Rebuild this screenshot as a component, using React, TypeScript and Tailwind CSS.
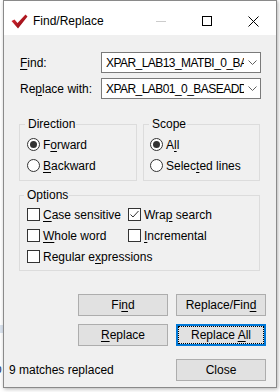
import { FC, ReactNode } from "react";

// mnemonic underline
const U: FC<{ children: ReactNode }> = ({ children }) => (
  <span className="underline decoration-1 underline-offset-[2px]">{children}</span>
);

const Radio: FC<{ checked?: boolean; children: ReactNode }> = ({ checked, children }) => (
  <div className="flex h-[21px] items-center gap-[3px]">
    <span className="flex h-[13px] w-[13px] items-center justify-center rounded-full border border-[#333333] bg-white">
      {checked && <span className="h-[7px] w-[7px] rounded-full bg-[#333333]" />}
    </span>
    <span className="whitespace-nowrap">{children}</span>
  </div>
);

const Check: FC<{ checked?: boolean; children: ReactNode }> = ({ checked, children }) => (
  <div className="flex h-[21px] items-center gap-[3px]">
    <span className="flex h-[13px] w-[13px] items-center justify-center border border-[#333333] bg-white">
      {checked && (
        <svg width="11" height="11" viewBox="0 0 11 11">
          <path d="M1.5 5.5 L4 8 L9.5 2" fill="none" stroke="#333333" strokeWidth="1" />
        </svg>
      )}
    </span>
    <span className="whitespace-nowrap">{children}</span>
  </div>
);

const Combo: FC<{ value: string }> = ({ value }) => (
  <div className="flex h-[21px] w-[160px] items-center border border-[#7a7a7a] bg-white">
    <div className="flex-1 overflow-hidden whitespace-nowrap pl-[4px] tracking-[-0.55px]">{value}</div>
    <div className="flex w-[16px] items-center justify-center">
      <svg width="9" height="5" viewBox="0 0 9 5">
        <path d="M0.5 0.5 L4.5 4.5 L8.5 0.5" fill="none" stroke="#606060" strokeWidth="1" />
      </svg>
    </div>
  </div>
);

const Btn: FC<{ children: ReactNode; primary?: boolean }> = ({ children, primary }) => (
  <div
    className={
      primary
        ? "flex h-[22px] w-[90px] items-center justify-center border-2 border-[#0078d7] bg-[#e1e1e1] outline-1 outline-dotted outline-black outline-offset-[-3px]"
        : "flex h-[22px] w-[90px] items-center justify-center border border-[#adadad] bg-[#e1e1e1]"
    }
  >
    <span className="whitespace-nowrap">{children}</span>
  </div>
);

export default function App() {
  return (
    <div className="relative h-[392px] w-[280px] overflow-hidden bg-white font-['Liberation_Sans',Arial,sans-serif] text-[12px] leading-[14px] text-black">
      {/* bits of the window behind */}
      <div className="absolute left-0 top-[325px] h-[8px] w-[4px] bg-[#dbe4ef]" />
      <div className="absolute left-[-5px] top-[362px] text-[12px] text-[#1f3a6b]">p</div>

      <div className="relative ml-[3px] flex h-[388px] w-[274px] flex-col border border-[#8a8a8a] shadow-[1px_1px_4px_rgba(0,0,0,0.3)]">
        {/* Title bar */}
        <div className="flex h-[34px] items-center bg-white pt-[6px]">
          <svg className="ml-[7px]" width="17" height="15" viewBox="0 0 17 15">
            <defs>
              <linearGradient id="chk" x1="0" y1="0" x2="1" y2="1">
                <stop offset="0" stopColor="#e8323c" />
                <stop offset="1" stopColor="#7a0008" />
              </linearGradient>
            </defs>
            <path d="M0.5 7 L3.5 5.5 L6.5 9 L14.5 0.5 L16.5 2.5 L7 14.5 Z" fill="url(#chk)" />
          </svg>
          <span className="ml-[5px]">Find/Replace</span>
          <div className="ml-auto flex h-full items-center">
            <div className="flex h-full w-[46px] items-center justify-center">
              <span className="h-px w-[10px] bg-[#cccccc]" />
            </div>
            <div className="flex h-full w-[46px] items-center justify-center">
              <span className="h-[10px] w-[10px] border border-black" />
            </div>
            <div className="flex h-full w-[46px] items-center justify-center">
              <svg width="11" height="11" viewBox="0 0 11 11">
                <path d="M0.5 0.5 L10.5 10.5 M10.5 0.5 L0.5 10.5" stroke="#000" strokeWidth="1" />
              </svg>
            </div>
          </div>
        </div>

        {/* Body */}
        <div className="flex flex-1 flex-col bg-[#f0f0f0] pt-[17px]">
          <div className="flex items-center">
            <span className="w-[97px] pl-[16px]">
              <U>F</U>ind:
            </span>
            <Combo value="XPAR_LAB13_MATBI_0_BASEADDR" />
          </div>
          <div className="mt-[5px] flex items-center">
            <span className="w-[97px] pl-[16px]">
              Re<U>p</U>lace with:
            </span>
            <Combo value="XPAR_LAB01_0_BASEADDR" />
          </div>

          <div className="mt-[18px] flex gap-[6px] pl-[15px]">
            <fieldset className="w-[118px] border border-[#dcdcdc] pb-[4px] pl-[7px]">
              <legend className="ml-[-2px] pl-[3px] pr-[1px]">Direction</legend>
              <div className="pt-[3px]">
                <Radio checked>
                  F<U>o</U>rward
                </Radio>
                <Radio>
                  <U>B</U>ackward
                </Radio>
              </div>
            </fieldset>
            <fieldset className="w-[117px] border border-[#dcdcdc] pb-[4px] pl-[6px]">
              <legend className="ml-[-1px] pl-[3px] pr-[1px]">Scope</legend>
              <div className="pt-[3px]">
                <Radio checked>
                  A<U>l</U>l
                </Radio>
                <Radio>
                  Selec<U>t</U>ed lines
                </Radio>
              </div>
            </fieldset>
          </div>

          <div className="pl-[15px]">
            <fieldset className="mt-[7px] w-[241px] border border-[#dcdcdc] pb-[3px] pl-[7px]">
              <legend className="ml-[-3px] pl-[3px] pr-[1px]">Options</legend>
              <div className="grid grid-cols-[101px_1fr] pt-[2px]">
                <Check>
                  <U>C</U>ase sensitive
                </Check>
                <Check checked>
                  Wra<U>p</U> search
                </Check>
                <Check>
                  <U>W</U>hole word
                </Check>
                <Check>
                  <U>I</U>ncremental
                </Check>
                <div className="col-span-2">
                  <Check>
                    Regular e<U>x</U>pressions
                  </Check>
                </div>
              </div>
            </fieldset>
          </div>

          <div className="mt-[23px] flex flex-col gap-[8px] pr-[10px]">
            <div className="flex justify-end gap-[8px]">
              <Btn>
                Fi<U>n</U>d
              </Btn>
              <Btn>
                Replace/Fin<U>d</U>
              </Btn>
            </div>
            <div className="flex justify-end gap-[8px]">
              <Btn>
                <U>R</U>eplace
              </Btn>
              <Btn primary>
                Replace <U>A</U>ll
              </Btn>
            </div>
            <div className="mt-[5px] flex items-center justify-between">
              <span className="pl-[5px]">9 matches replaced</span>
              <Btn>Close</Btn>
            </div>
          </div>
        </div>
      </div>
    </div>
  );
}
